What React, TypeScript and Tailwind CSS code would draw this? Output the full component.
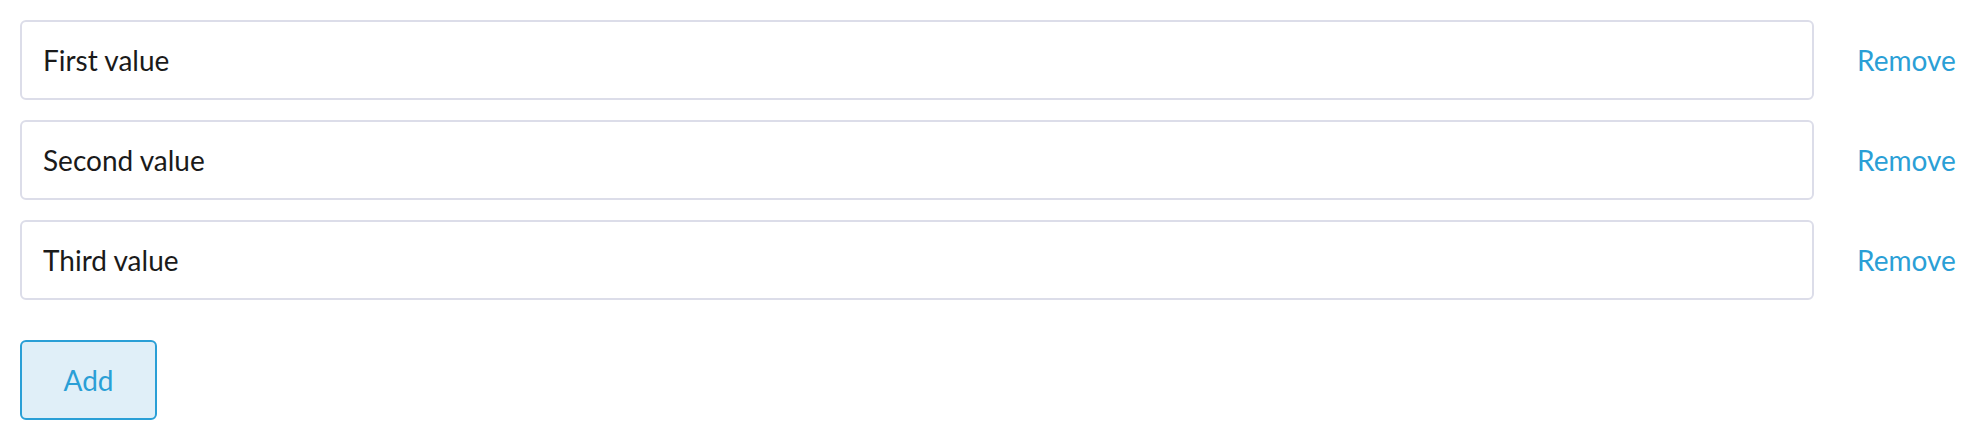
import React, { useState } from 'react';

const App = () => {
  const [values, setValues] = useState(['First value', 'Second value', 'Third value']);

  const handleChange = (i: number, v: string) => {
    setValues(prev => prev.map((x, j) => (j === i ? v : x)));
  };

  const remove = (i: number) => setValues(prev => prev.filter((_, j) => j !== i));
  const add = () => setValues(prev => [...prev, '']);

  return (
    <div className="p-5 font-['Lato',sans-serif] bg-white">
      <div className="flex flex-col gap-5">
        {values.map((v, i) => (
          <div key={i} className="flex items-center">
            <input
              type="text"
              value={v}
              onChange={e => handleChange(i, e.target.value)}
              className="w-[1794px] h-[80px] px-[21px] border-2 border-[#dcdde9] rounded-[6px] text-[28px] text-[#1a1a1a] outline-none"
            />
            <button
              onClick={() => remove(i)}
              className="ml-[43px] text-[28px] text-[#2a9fd6] leading-none"
            >
              Remove
            </button>
          </div>
        ))}
      </div>
      <button
        onClick={add}
        className="mt-10 w-[137px] h-[80px] border-2 border-[#2a9fd6] bg-[#e0eff8] rounded-[6px] text-[28px] text-[#2a9fd6]"
      >
        Add
      </button>
    </div>
  );
};

export default App;
